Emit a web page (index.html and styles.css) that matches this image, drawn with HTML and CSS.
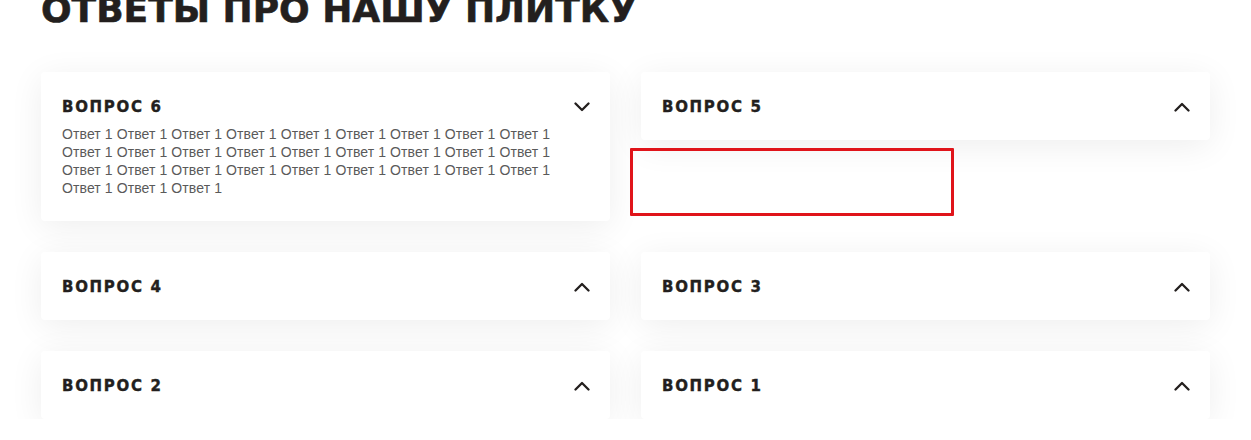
FILE: index.html
```html
<!DOCTYPE html>
<html lang="ru">
<head>
<meta charset="utf-8">
<title>FAQ</title>
<link rel="stylesheet" href="styles.css">
</head>
<body>
<section class="faq">
  <h2 class="faq-title">ОТВЕТЫ ПРО НАШУ ПЛИТКУ</h2>
  <div class="faq-grid">
    <div class="card open">
      <div class="card-head">
        <span class="q">ВОПРОС 6</span>
        <svg class="chev" width="16" height="10" viewBox="0 0 16 10"><polyline points="1.5,1.5 8,8 14.5,1.5"/></svg>
      </div>
      <p class="answer">Ответ&nbsp;1 Ответ&nbsp;1 Ответ&nbsp;1 Ответ&nbsp;1 Ответ&nbsp;1 Ответ&nbsp;1 Ответ&nbsp;1 Ответ&nbsp;1 Ответ&nbsp;1 Ответ&nbsp;1 Ответ&nbsp;1 Ответ&nbsp;1 Ответ&nbsp;1 Ответ&nbsp;1 Ответ&nbsp;1 Ответ&nbsp;1 Ответ&nbsp;1 Ответ&nbsp;1 Ответ&nbsp;1 Ответ&nbsp;1 Ответ&nbsp;1 Ответ&nbsp;1 Ответ&nbsp;1 Ответ&nbsp;1 Ответ&nbsp;1 Ответ&nbsp;1 Ответ&nbsp;1 Ответ&nbsp;1 Ответ&nbsp;1 Ответ&nbsp;1</p>
    </div>
    <div class="card">
      <div class="card-head">
        <span class="q">ВОПРОС 5</span>
        <svg class="chev" width="16" height="10" viewBox="0 0 16 10"><polyline points="1.5,8.5 8,2 14.5,8.5"/></svg>
      </div>
    </div>
    <div class="card">
      <div class="card-head">
        <span class="q">ВОПРОС 4</span>
        <svg class="chev" width="16" height="10" viewBox="0 0 16 10"><polyline points="1.5,8.5 8,2 14.5,8.5"/></svg>
      </div>
    </div>
    <div class="card">
      <div class="card-head">
        <span class="q">ВОПРОС 3</span>
        <svg class="chev" width="16" height="10" viewBox="0 0 16 10"><polyline points="1.5,8.5 8,2 14.5,8.5"/></svg>
      </div>
    </div>
    <div class="card">
      <div class="card-head">
        <span class="q">ВОПРОС 2</span>
        <svg class="chev" width="16" height="10" viewBox="0 0 16 10"><polyline points="1.5,8.5 8,2 14.5,8.5"/></svg>
      </div>
    </div>
    <div class="card">
      <div class="card-head">
        <span class="q">ВОПРОС 1</span>
        <svg class="chev" width="16" height="10" viewBox="0 0 16 10"><polyline points="1.5,8.5 8,2 14.5,8.5"/></svg>
      </div>
    </div>
    <div class="highlight"></div>
  </div>
</section>
</body>
</html>
```
FILE: styles.css
```css
html, body {
  margin: 0;
  padding: 0;
  background: #ffffff;
}
body {
  font-family: "Liberation Sans", Arial, sans-serif;
  color: #222;
  overflow: hidden;
}
.faq {
  padding: 0 41px 0 41px;
}
.faq-title {
  margin: -12px 0 0 0;
  font-family: "DejaVu Sans", sans-serif;
  font-weight: 700;
  font-size: 36px;
  line-height: 44px;
  color: #231f1e;
  -webkit-text-stroke: 0.6px #231f1e;
}
.faq-grid {
  position: relative;
  margin-top: 40px;
  display: grid;
  grid-template-columns: 1fr 1fr;
  column-gap: 31px;
  row-gap: 31px;
  align-items: start;
}
.card {
  background: #fff;
  border-radius: 4px;
  padding: 25px 20px 23px 21px;
  box-shadow: 0 6px 34px rgba(0, 0, 0, 0.07);
}
.card-head {
  display: flex;
  align-items: center;
  justify-content: space-between;
  height: 20px;
}
.q {
  font-family: "DejaVu Sans", sans-serif;
  font-weight: 700;
  font-size: 15px;
  line-height: 20px;
  letter-spacing: 1.7px;
  color: #231f1e;
  -webkit-text-stroke: 0.4px #231f1e;
}
.chev {
  display: block;
  fill: none;
  stroke: #231f1e;
  stroke-width: 2.3;
  stroke-linecap: round;
  stroke-linejoin: round;
}
.answer {
  margin: 8px 0 0 0;
  padding-bottom: 1px;
  font-size: 14px;
  line-height: 18px;
  letter-spacing: 0.1px;
  color: #5a5a5a;
  max-width: 529px;
}
.highlight {
  position: absolute;
  left: 589px;
  top: 76px;
  width: 318px;
  height: 62px;
  border: 3px solid #e0141a;
  border-radius: 1px;
}
```
